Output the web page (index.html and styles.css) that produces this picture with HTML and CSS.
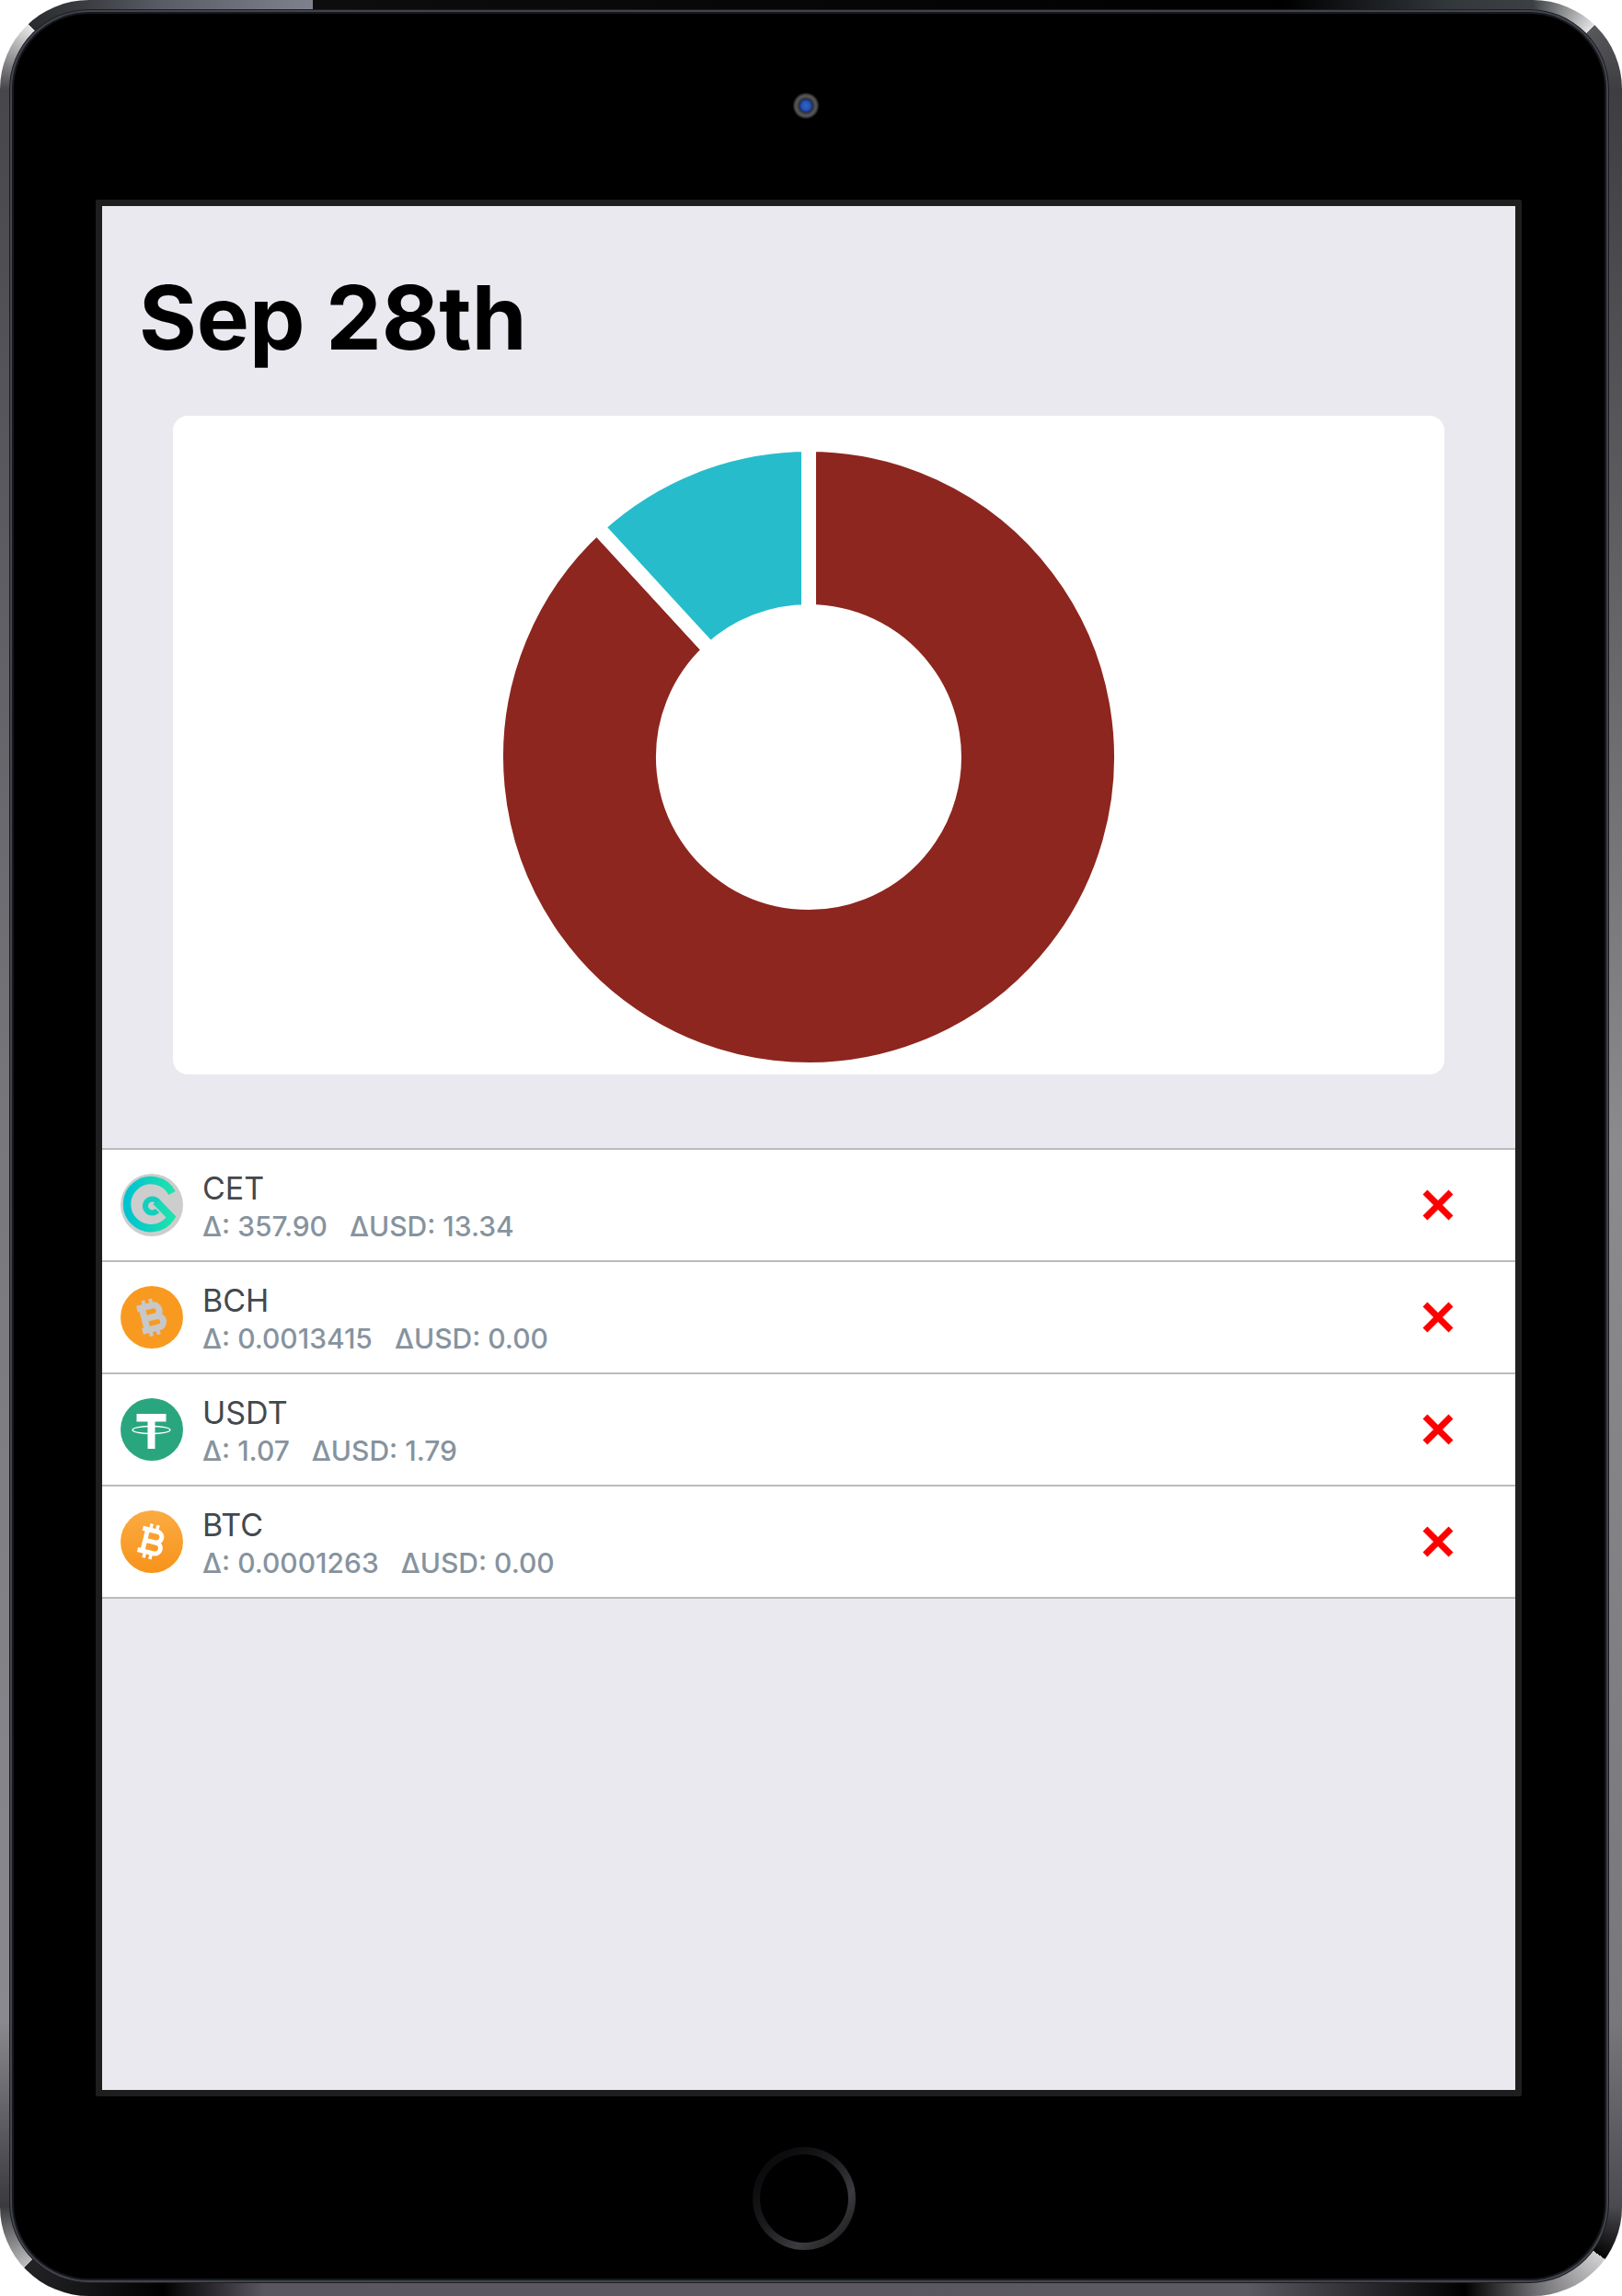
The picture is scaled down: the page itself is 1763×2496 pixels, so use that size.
FILE: index.html
```html
<!DOCTYPE html>
<html lang="en">
<head>
  <meta charset="UTF-8">
  <title>Sep 28th</title>
  <link rel="stylesheet" href="styles.css">
</head>
<body>
  <div class="device">
    <div class="face">
      <div class="camera"></div>
      <div class="screen">
        <h1 class="title">Sep 28th</h1>

        <div class="card">
          <svg class="donut" width="1382" height="716" viewBox="0 0 1382 716">
            <path fill="#8d261f" stroke="#fff" stroke-width="16" d="M691 31A340 340 0 1 1 460.9 120.7L584 254.7A158 158 0 1 0 691 213Z"/>
            <path fill="#27bccc" stroke="#fff" stroke-width="16" d="M691 31A340 340 0 0 0 460.9 120.7L584 254.7A158 158 0 0 1 691 213Z"/>
          </svg>
        </div>

        <div class="list">
          <div class="row">
            <svg class="coin" width="68" height="68" viewBox="0 0 68 68">
              <defs>
                <linearGradient id="cetGrad" x1="0" y1="0" x2="1" y2="0">
                  <stop offset="0" stop-color="#00c3d0"/>
                  <stop offset="1" stop-color="#1fe2ae"/>
                </linearGradient>
              </defs>
              <circle cx="34" cy="34" r="34" fill="#cdcdcd"/>
              <path class="cet-outer" stroke="url(#cetGrad)" d="M56 21A26 26 0 1 0 55 47L38.5 30"/>
              <path class="cet-inner" d="M40.5 30.5A7.5 7.5 0 1 0 40 40"/>
            </svg>
            <div class="info">
              <div class="name">CET</div>
              <div class="sub"><span>Δ: 357.90</span><span>ΔUSD: 13.34</span></div>
            </div>
            <svg class="remove" width="34" height="34" viewBox="0 0 34 34"><path d="M3 3L31 31M31 3L3 31"/></svg>
          </div>

          <div class="row">
            <svg class="coin" width="68" height="68" viewBox="0 0 68 68">
              <circle cx="34" cy="34" r="34" fill="#f99a20"/>
              <g class="btc-mark grey" transform="rotate(-14 34 34)">
                <path class="bowl" d="M20.5 21.5H37.5a6.25 6.25 0 0 1 0 12.5H27M27 34H39a6.25 6.25 0 0 1 0 12.5H20.5M26 21.5V46.5"/>
                <path class="bars" d="M29 14V21.5M37 14V21.5M29 46.5V54M37 46.5V54"/>
              </g>
            </svg>
            <div class="info">
              <div class="name">BCH</div>
              <div class="sub"><span>Δ: 0.0013415</span><span>ΔUSD: 0.00</span></div>
            </div>
            <svg class="remove" width="34" height="34" viewBox="0 0 34 34"><path d="M3 3L31 31M31 3L3 31"/></svg>
          </div>

          <div class="row">
            <svg class="coin" width="68" height="68" viewBox="0 0 68 68">
              <circle cx="34" cy="34" r="34" fill="#2aa67f"/>
              <rect x="17.5" y="17" width="32" height="8.5" fill="#fff"/>
              <rect x="29.5" y="17" width="8" height="38" fill="#fff"/>
              <ellipse cx="33.5" cy="34.5" rx="20.5" ry="4" fill="none" stroke="#fff" stroke-width="1.3"/>
            </svg>
            <div class="info">
              <div class="name">USDT</div>
              <div class="sub"><span>Δ: 1.07</span><span>ΔUSD: 1.79</span></div>
            </div>
            <svg class="remove" width="34" height="34" viewBox="0 0 34 34"><path d="M3 3L31 31M31 3L3 31"/></svg>
          </div>

          <div class="row">
            <svg class="coin" width="68" height="68" viewBox="0 0 68 68">
              <defs>
                <linearGradient id="btcGrad" x1="0" y1="0" x2="0" y2="1">
                  <stop offset="0" stop-color="#fbab43"/>
                  <stop offset="1" stop-color="#f7931a"/>
                </linearGradient>
              </defs>
              <circle cx="34" cy="34" r="34" fill="url(#btcGrad)"/>
              <g class="btc-mark white" transform="rotate(14 34 34)">
                <path class="bowl" d="M21 22H37.5a6 6 0 0 1 0 12H27M27 34H39a6 6 0 0 1 0 12H21M26.5 22V46"/>
                <path class="bars" d="M29.5 15V22M36.5 15V22M29.5 46V53M36.5 46V53"/>
              </g>
            </svg>
            <div class="info">
              <div class="name">BTC</div>
              <div class="sub"><span>Δ: 0.0001263</span><span>ΔUSD: 0.00</span></div>
            </div>
            <svg class="remove" width="34" height="34" viewBox="0 0 34 34"><path d="M3 3L31 31M31 3L3 31"/></svg>
          </div>
        </div>
      </div>
      <div class="home"></div>
    </div>
  </div>
</body>
</html>
```

FILE: styles.css
```css
* {
  box-sizing: border-box;
}
body {
  margin: 0;
  background: #fff;
  font-family: Inter, "Liberation Sans", sans-serif;
}

/* metal rim: four corners and four edge strips */
.device {
  width: 1763px;
  height: 2496px;
  padding: 15px 19px 19px 15px;
  border-radius: 97px;
  background-color: #3a3a3e;
  background-repeat: no-repeat;
  background-image:
    conic-gradient(from 270deg at 100% 100%, #46464b 0deg, #a0a0a2 25deg, #e8e8e6 47deg, #2a2b2e 47deg, #3c3e43 90deg),
    conic-gradient(from 0deg at 0 100%, #3c4044 0deg, #999b9d 25deg, #e2e3e3 44deg, #58585c 44deg, #3e3e42 90deg),
    conic-gradient(from 90deg at 0 0, #4a4a50 0deg, #050505 36deg, #d0d0d2 36deg, #6a6a6e 90deg, #6a6a6e 360deg),
    conic-gradient(from 180deg at 100% 0, #141416 0deg, #232325 47deg, #bdbdc0 47deg, #77777a 70deg, #3a3a3e 90deg),
    linear-gradient(to right, #3c3e43 0, #5a5d66 80px, #7f828c 243px, #0d0d0d 243px, #000 1300px, #33383c 1480px, #3c4044 100%),
    linear-gradient(to right, #141416 0, #000 80px, #5a5660 190px, #5a5860 1260px, #26262a 1400px, #000 1495px, #6a6a6e 100%),
    linear-gradient(to bottom, #46464b 0, #77777b 1100px, #8a8a8e 2100px, #3a3a3e 100%),
    linear-gradient(to bottom, #3e3e42 0, #8b8b8d 1150px, #77777c 2100px, #4a4a50 100%);
  background-position:
    left top, right top, right bottom, left bottom,
    97px 0, 97px 100%, 0 97px, 100% 97px;
  background-size:
    97px 97px, 97px 97px, 97px 97px, 97px 97px,
    1569px 16px, 1569px 16px, 16px 2302px, 16px 2302px;
}
.face {
  display: flex;
  flex-direction: column;
  align-items: center;
  height: 100%;
  padding-top: 86px;
  border-radius: 82px;
  background: #000;
  box-shadow: 0 0 0 2px #17181d, 0 0 0 4px #41444c, 0 0 0 5px #1c1d22;
}
.camera {
  width: 28px;
  height: 28px;
  margin-right: 8px;
  border-radius: 50%;
  background: radial-gradient(circle, #3265c8 0, #2450b0 5px, #16306e 7px, #3a3a3c 8px, #5a5a5a 11px, #1a1a1a 14px);
}
.screen {
  width: 1550px;
  height: 2062px;
  margin-top: 88px;
  margin-right: 1px;
  border: 7px solid #1e1e1e;
  border-radius: 2px;
  background: #e9e9ef;
}
.home {
  width: 112px;
  height: 112px;
  margin-top: 55px;
  margin-right: 11px;
  border-radius: 50%;
  border: 8px solid transparent;
  background:
    linear-gradient(#000, #000) padding-box,
    linear-gradient(135deg, #0c0c0e 20%, #1c1c1f 45%, #3c3c40 70%, #111 100%) border-box;
}

.title {
  margin: 0;
  padding: 71px 0 0 40px;
  height: 228px;
  font-size: 96px;
  line-height: 100px;
  font-weight: 700;
  color: #000;
}
.card {
  margin: 0 77px;
  height: 716px;
  border-radius: 16px;
  background: #fff;
}
.donut {
  display: block;
}

.list {
  margin-top: 80px;
  border-top: 2px solid #bbb;
}
.row {
  display: flex;
  align-items: center;
  height: 122px;
  padding: 0 67px 0 20px;
  background: #fff;
  border-bottom: 2px solid #bbb;
}
.coin {
  flex: none;
}
.info {
  flex: 1;
  margin-left: 21px;
}
.name {
  font-size: 34px;
  line-height: 46px;
  color: #43484d;
}
.sub {
  display: flex;
  gap: 24px;
  font-size: 30px;
  line-height: 36px;
  font-weight: 500;
  color: #86939e;
}
.cet-outer {
  fill: none;
  stroke-width: 8.5;
  stroke-miterlimit: 8;
}
.cet-inner {
  fill: none;
  stroke: #12d0bd;
  stroke-width: 6;
}
.btc-mark path {
  fill: none;
}
.btc-mark.grey path {
  stroke: #c8c8c8;
}
.btc-mark.grey .bowl {
  stroke-width: 7;
}
.btc-mark.grey .bars {
  stroke-width: 4;
}
.btc-mark.white path {
  stroke: #fff;
}
.btc-mark.white .bowl {
  stroke-width: 5;
}
.btc-mark.white .bars {
  stroke-width: 3.5;
}
.remove {
  flex: none;
}
.remove path {
  fill: none;
  stroke: #f00;
  stroke-width: 7;
}
```
